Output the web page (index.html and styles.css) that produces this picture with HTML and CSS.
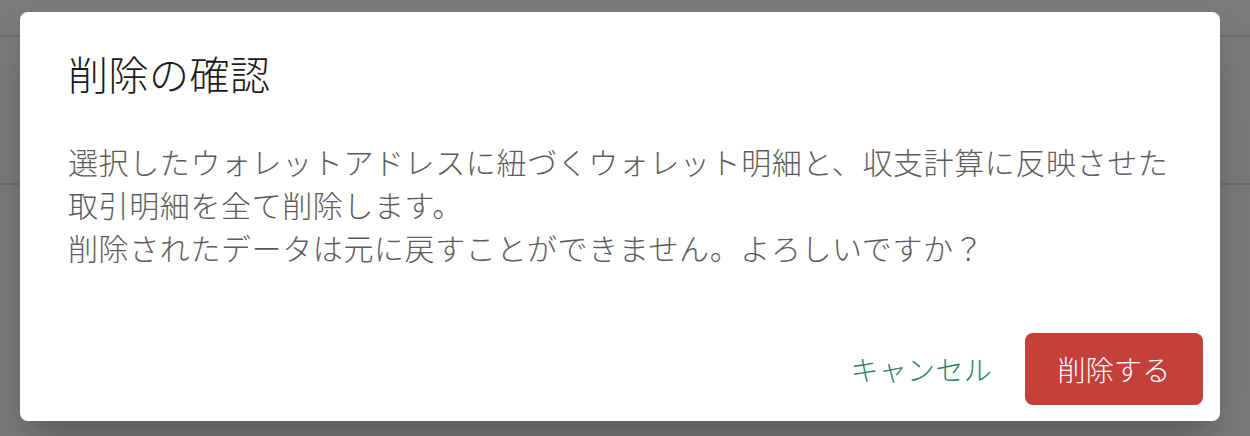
FILE: index.html
```html
<!DOCTYPE html>
<html lang="ja">
<head>
<meta charset="utf-8">
<title>削除の確認</title>
<link rel="stylesheet" href="styles.css">
</head>
<body>
<div class="page">
  <div class="page-header"></div>
  <div class="page-section"></div>
</div>
<div class="dialog" role="dialog">
  <h2 class="dialog-title">削除の確認</h2>
  <div class="dialog-text">
    選択したウォレットアドレスに紐づくウォレット明細と、収支計算に反映させた<br>取引明細を全て削除します。<br>削除されたデータは元に戻すことができません。よろしいですか？
  </div>
  <div class="dialog-actions">
    <button class="btn btn-text">キャンセル</button>
    <button class="btn btn-danger">削除する</button>
  </div>
</div>
</body>
</html>
```

FILE: styles.css
```css
html, body {
  margin: 0;
  padding: 0;
}
body {
  width: 1250px;
  height: 436px;
  overflow: hidden;
  background: #7a7a7a;
  font-family: "Noto Sans CJK JP", "Noto Sans", sans-serif;
}
.page {
  display: flex;
  flex-direction: column;
}
.page-header {
  height: 35px;
  border-bottom: 2px solid #6c6c6c;
}
.page-section {
  height: 146px;
  border-bottom: 2px solid #6c6c6c;
}
.dialog {
  position: absolute;
  left: 20px;
  top: 12px;
  width: 1200px;
  height: 409px;
  box-sizing: border-box;
  background: #ffffff;
  border-radius: 8px;
  padding: 37px 17px 16px 48px;
  display: flex;
  flex-direction: column;
  box-shadow: 0 22px 30px -14px rgba(0,0,0,.2), 0 40px 60px 0 rgba(0,0,0,.1);
}
.dialog-title {
  margin: 0;
  font-size: 40px;
  line-height: 48px;
  font-weight: 300;
  letter-spacing: 0.5px;
  color: #1c1c1c;
}
.dialog-text {
  margin-top: 43px;
  font-size: 30px;
  line-height: 43px;
  font-weight: 300;
  letter-spacing: 0.6px;
  color: #5c5c5c;
}
.dialog-actions {
  margin-top: auto;
  display: flex;
  justify-content: flex-end;
  align-items: center;
  gap: 0;
}
.btn {
  height: 72px;
  border: none;
  border-radius: 8px;
  padding: 0 33px;
  font-family: "Noto Sans CJK JP", "Noto Sans", sans-serif;
  font-size: 28px;
  font-weight: 300;
  letter-spacing: 0.3px;
  background: transparent;
  cursor: pointer;
}
.btn-text {
  color: #2f8262;
}
.btn-danger {
  width: 178px;
  padding: 0;
  background: #c4403b;
  color: #ffffff;
}
```
